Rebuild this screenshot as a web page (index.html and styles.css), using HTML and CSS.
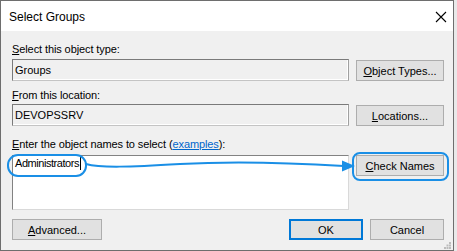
FILE: index.html
```html
<!DOCTYPE html>
<html lang="en">

<head>
    <meta charset="UTF-8">
    <meta name="viewport" content="width=device-width, initial-scale=1.0">
    <title>Select Groups</title>
    <link rel="stylesheet" href="styles.css">
</head>

<body>
    <div class="window">
        <!-- 标题栏 -->
        <div class="titlebar">
            <span class="title">Select Groups</span>
            <svg class="close" width="12" height="12" viewBox="0 0 12 12">
                <path d="M1 1 L11 11 M11 1 L1 11" stroke="#000" stroke-width="1.1" fill="none"/>
            </svg>
        </div>

        <div class="content">
            <div class="label first"><u>S</u>elect this object type:</div>
            <div class="row">
                <div class="field">Groups</div>
                <button class="btn"><u>O</u>bject Types...</button>
            </div>

            <div class="label second"><u>F</u>rom this location:</div>
            <div class="row">
                <div class="field">DEVOPSSRV</div>
                <button class="btn"><u>L</u>ocations...</button>
            </div>

            <div class="label third"><u>E</u>nter the object names to select (<a href="#">examples</a>):</div>
            <div class="row">
                <div class="names">Administrators<span class="caret"></span></div>
                <button class="btn"><u>C</u>heck Names</button>
            </div>

            <div class="bottom">
                <button class="btn wide"><u>A</u>dvanced...</button>
                <div class="actions">
                    <button class="btn small default">OK</button>
                    <button class="btn small">Cancel</button>
                </div>
            </div>
        </div>

        <!-- 右下角拖拽点 -->
        <svg class="grip" width="7" height="7" viewBox="0 0 7 7">
            <rect x="5" y="0" width="2" height="2" fill="#bcbcbc"/>
            <rect x="2.5" y="2.5" width="2" height="2" fill="#bcbcbc"/>
            <rect x="5" y="2.5" width="2" height="2" fill="#bcbcbc"/>
            <rect x="0" y="5" width="2" height="2" fill="#bcbcbc"/>
            <rect x="2.5" y="5" width="2" height="2" fill="#bcbcbc"/>
            <rect x="5" y="5" width="2" height="2" fill="#bcbcbc"/>
        </svg>

        <!-- 蓝色标注：圈住名称，箭头指向 Check Names -->
        <svg class="marks" width="454" height="251" viewBox="0 0 454 251">
            <rect x="8" y="155" width="78" height="21" rx="10" fill="none" stroke="#1a8fe6" stroke-width="2"/>
            <path d="M86 164 C100 168, 130 167, 180 164 S280 162, 344 166" fill="none" stroke="#1a8fe6" stroke-width="2"/>
            <polygon points="342,160.5 355,166 342,171.5" fill="#1a8fe6"/>
            <rect x="353" y="153" width="95" height="27" rx="7" fill="none" stroke="#1a8fe6" stroke-width="2"/>
        </svg>
    </div>
</body>

</html>
```

FILE: styles.css
```css
* {
    margin: 0;
    padding: 0;
    box-sizing: border-box;
}

body {
    background-color: #e9e9e9;
    font-family: "Liberation Sans", Arial, sans-serif;
    font-size: 11px;
    color: #000;
}

/* 整个对话框 */

.window {
    position: relative;
    width: 454px;
    height: 251px;
    background-color: #f0f0f0;
    border: 1px solid #6e6e6e;
}

.titlebar {
    display: flex;
    align-items: center;
    justify-content: space-between;
    height: 30px;
    padding: 0 6px 0 8px;
    background-color: #fff;
}

.title {
    font-size: 12px;
    margin-top: 2px;
}

.close {
    margin-top: 1px;
}

.content {
    padding: 0 9px 0 11px;
}

.label {
    height: 13px;
    line-height: 13px;
    white-space: nowrap;
    letter-spacing: -0.1px;
}

.first {
    margin-top: 12px;
    margin-bottom: 3px;
}

.second {
    margin-top: 8px;
    margin-bottom: 2px;
}

.third {
    margin-top: 12px;
    margin-bottom: 4px;
}

.label a {
    color: #0066cc;
}

/* 输入框和按钮一行 */

.row {
    display: grid;
    grid-template-columns: 337px 88px;
    column-gap: 7px;
    align-items: start;
}

.field {
    height: 22px;
    line-height: 13px;
    padding: 4px 2px;
    border: 1px solid;
    border-color: #7a7a7a #a0a0a0 #c4c4c4 #7a7a7a;
    box-shadow: inset -1px -1px #fff;
}

.names {
    height: 55px;
    line-height: 13px;
    padding: 1px 2px;
    letter-spacing: -0.45px;
    background-color: #fff;
    border: 1px solid;
    border-color: #828282 #d9d9d9 #d9d9d9 #828282;
}

.caret {
    display: inline-block;
    width: 1px;
    height: 13px;
    margin-left: 1px;
    vertical-align: top;
    background-color: #000;
}

.btn {
    height: 21px;
    margin-top: 1px;
    font-family: inherit;
    font-size: 11px;
    color: #000;
    background-color: #e1e1e1;
    border: 1px solid #adadad;
}

.names + .btn {
    margin-top: 0;
}

.bottom {
    display: flex;
    justify-content: space-between;
    margin-top: 8px;
}

.actions {
    display: flex;
    gap: 7px;
}

.wide {
    width: 90px;
}

.small {
    width: 74px;
}

.default {
    border-color: #0078d7;
    box-shadow: inset 0 0 0 1px #0078d7;
}

.grip {
    position: absolute;
    right: 2px;
    bottom: 1px;
}

.marks {
    position: absolute;
    left: -1px;
    top: -1px;
    pointer-events: none;
}
```
